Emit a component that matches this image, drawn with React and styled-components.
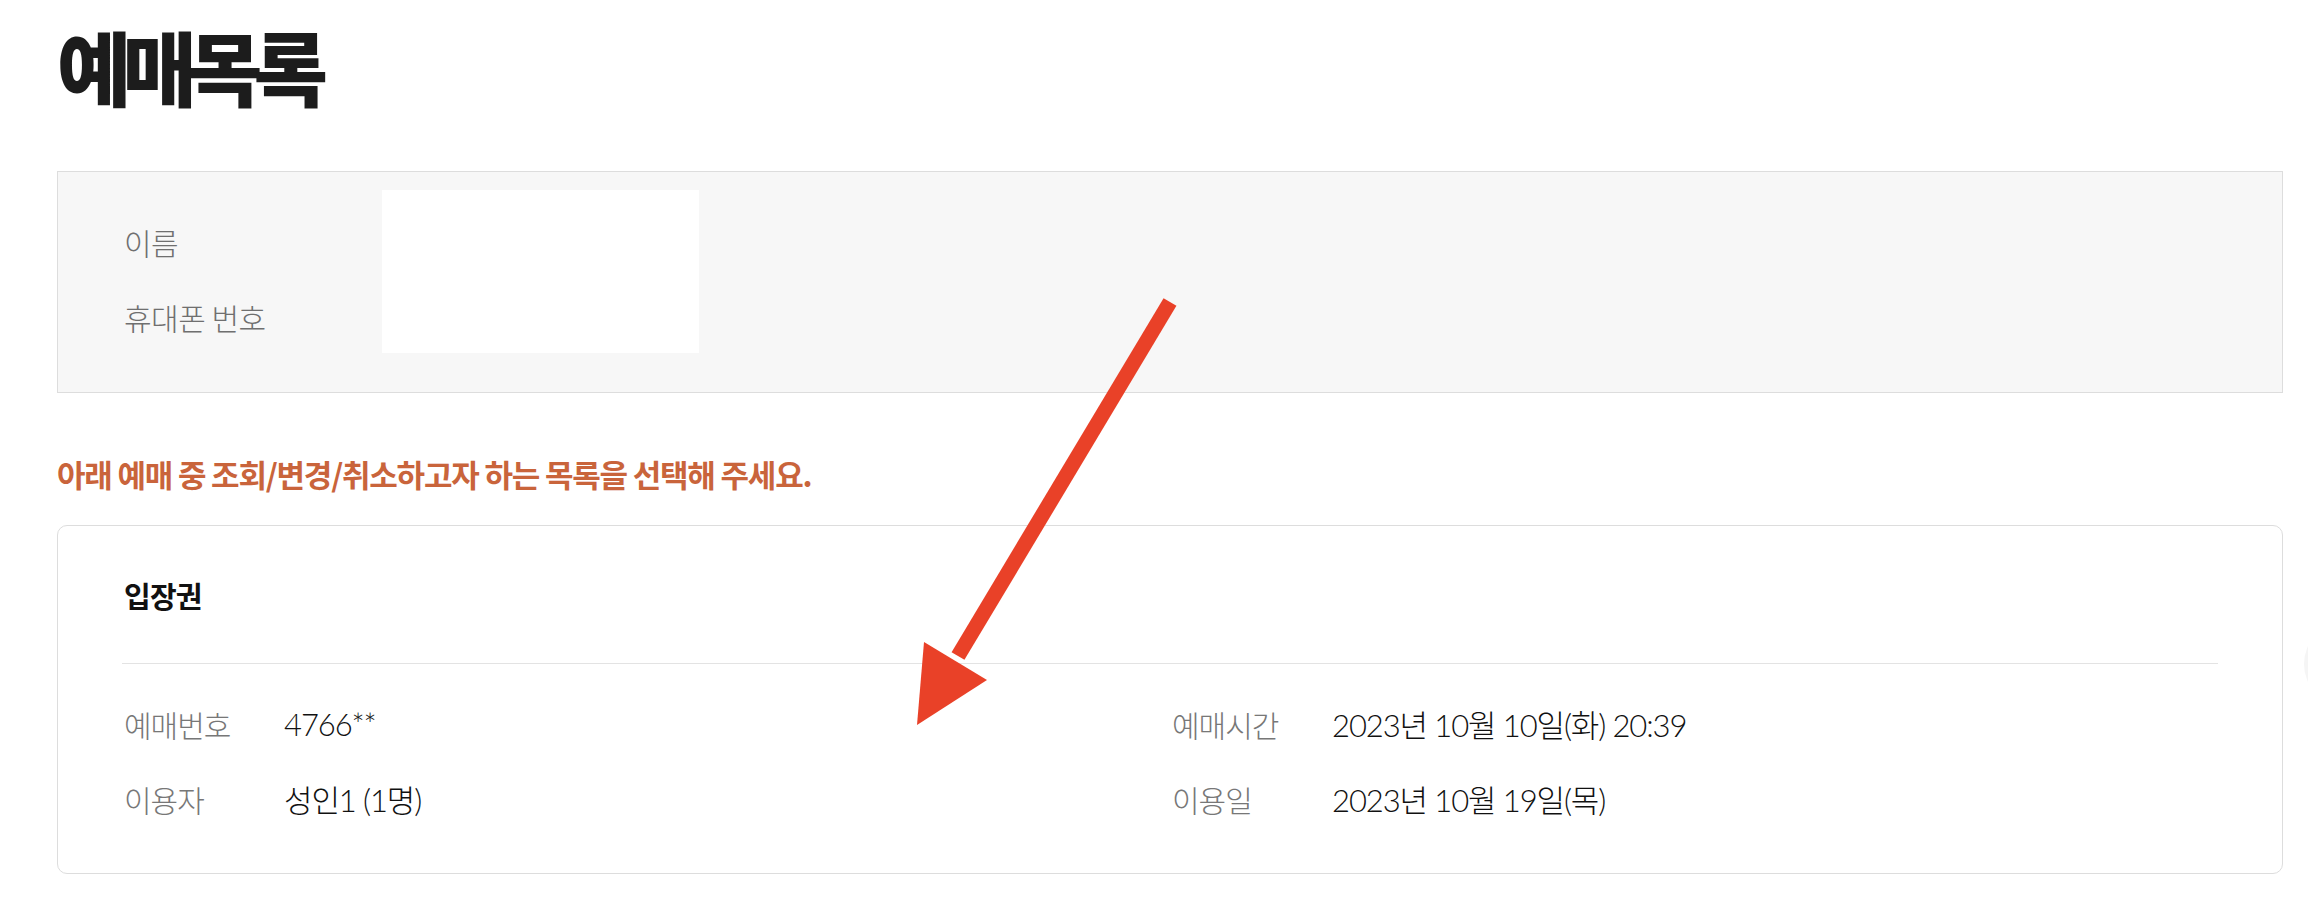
import styled, { createGlobalStyle } from "styled-components";

const GlobalStyle = createGlobalStyle`
  html, body {
    margin: 0;
    padding: 0;
    background: #fff;
  }
  body {
    font-family: "Noto Sans CJK KR", "Noto Sans", sans-serif;
    color: #222;
  }
`;

const ko = `"Noto Sans CJK KR", sans-serif`;
const mixed = `Lato, "Noto Sans CJK KR", sans-serif`;

export default function App() {
  return (
    <>
      <GlobalStyle />
      <Page>
        <Title>예매목록</Title>

        <UserPanel>
          <LabelList>
            <UserLabel>이름</UserLabel>
            <UserLabel>휴대폰 번호</UserLabel>
          </LabelList>
          <Redacted />
        </UserPanel>

        <Notice>아래 예매 중 조회/변경/취소하고자 하는 목록을 선택해 주세요.</Notice>

        <TicketCard>
          <CardHeader>
            <CardTitle>입장권</CardTitle>
          </CardHeader>
          <InfoGrid>
            <InfoRow>
              <InfoLabel>예매번호</InfoLabel>
              <InfoValue>4766**</InfoValue>
            </InfoRow>
            <InfoRow>
              <InfoLabel>예매시간</InfoLabel>
              <InfoValue>2023년 10월 10일(화) 20:39</InfoValue>
            </InfoRow>
            <InfoRow>
              <InfoLabel>이용자</InfoLabel>
              <InfoValue>성인1 (1명)</InfoValue>
            </InfoRow>
            <InfoRow>
              <InfoLabel>이용일</InfoLabel>
              <InfoValue>2023년 10월 19일(목)</InfoValue>
            </InfoRow>
          </InfoGrid>
        </TicketCard>

        <Arrow viewBox="0 0 300 450" aria-hidden="true">
          <line
            x1="270"
            y1="12"
            x2="58"
            y2="366"
            stroke="#e94128"
            strokeWidth="15"
          />
          <polygon points="17,435 24,352 87,390" fill="#e94128" />
        </Arrow>

        <FloatingButton />
      </Page>
    </>
  );
}

const Page = styled.div`
  position: relative;
  min-height: 914px;
  box-sizing: border-box;
  padding: 15px 25px 0 57px;
  overflow: hidden;
`;

const Title = styled.h1`
  margin: 0 0 56px;
  font-family: ${ko};
  font-size: 81px;
  font-weight: 900;
  line-height: 100px;
  letter-spacing: -9px;
  color: #1c1c1c;
`;

const UserPanel = styled.div`
  display: flex;
  align-items: flex-start;
  padding: 18px 0 37px 66px;
  background: #f7f7f7;
  border: 1px solid #dddddd;
`;

const LabelList = styled.div`
  display: flex;
  flex-direction: column;
  width: 258px;
  padding-top: 15px;
`;

const UserLabel = styled.div`
  font-family: ${ko};
  font-size: 30px;
  font-weight: 300;
  line-height: 75px;
  height: 75px;
  letter-spacing: -0.5px;
  color: #6f6f6f;
`;

const Redacted = styled.div`
  width: 317px;
  height: 163px;
  background: #fff;
`;

const Notice = styled.p`
  margin: 56px 0 26px;
  font-family: ${ko};
  font-size: 31px;
  font-weight: 700;
  line-height: 50px;
  letter-spacing: -1.2px;
  color: #c9643b;
`;

const TicketCard = styled.section`
  border: 1px solid #dddddd;
  border-radius: 10px;
  padding: 0 64px;
  background: #fff;
`;

const CardHeader = styled.div`
  display: flex;
  align-items: center;
  height: 137px;
  border-bottom: 1px solid #e3e3e3;
`;

const CardTitle = styled.h2`
  margin: 0;
  padding-left: 2px;
  font-family: ${ko};
  font-size: 29px;
  font-weight: 700;
  letter-spacing: -0.8px;
  color: #111;
`;

const InfoGrid = styled.div`
  display: grid;
  grid-template-columns: 1fr 1fr;
  padding: 22px 0 37px;
`;

const InfoRow = styled.div`
  display: flex;
  align-items: center;
  height: 75px;
  padding-left: 2px;
`;

const InfoLabel = styled.span`
  width: 160px;
  flex: none;
  font-family: ${ko};
  font-size: 30px;
  font-weight: 300;
  letter-spacing: -1px;
  color: #777;
`;

const InfoValue = styled.span`
  font-family: ${mixed};
  font-size: 31px;
  font-weight: 300;
  letter-spacing: -1.1px;
  color: #111;
`;

const Arrow = styled.svg`
  position: absolute;
  left: 900px;
  top: 290px;
  width: 300px;
  height: 450px;
  pointer-events: none;
`;

const FloatingButton = styled.div`
  position: absolute;
  left: 2304px;
  top: 622px;
  width: 84px;
  height: 84px;
  border-radius: 50%;
  background: #f5f5f5;
`;
